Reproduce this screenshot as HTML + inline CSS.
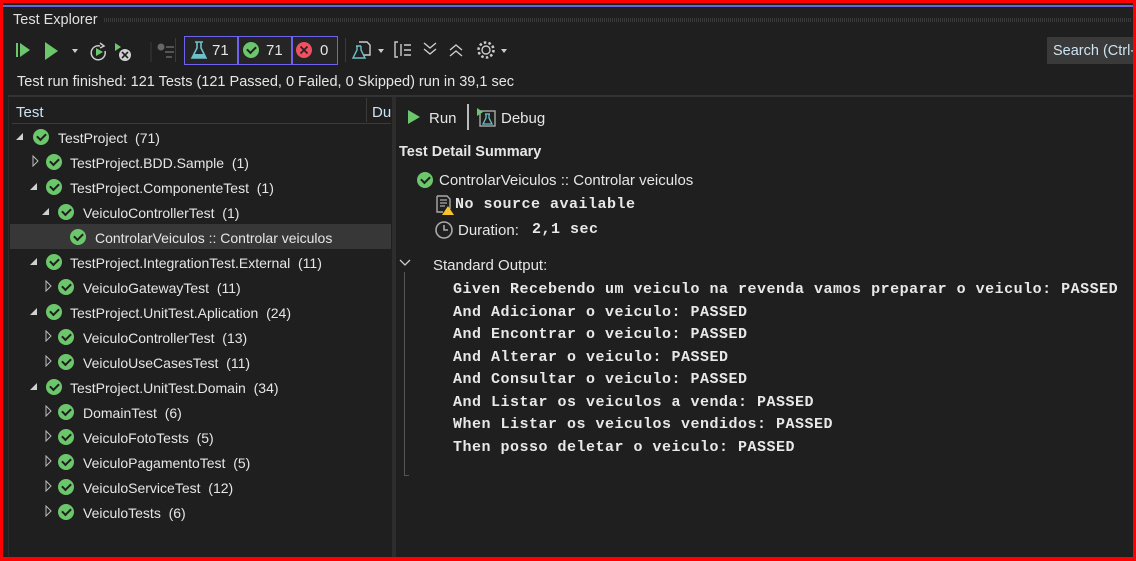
<!DOCTYPE html>
<html><head><meta charset="utf-8"><style>
*{margin:0;padding:0;box-sizing:border-box}
body{width:1136px;height:561px;overflow:hidden;background:#1f1f1f;font-family:"Liberation Sans",sans-serif;color:#e6e6e6;position:relative}
.abs{position:absolute;white-space:nowrap}
.frame{position:absolute;left:0;top:0;width:1136px;height:561px;border:3px solid #f00;border-bottom-width:4px;z-index:10;pointer-events:none}
.t{font-size:14px}
.chk{position:absolute;width:16px;height:16px;border-radius:50%;background:#6cc76c}
.chk:after{content:"";position:absolute;left:4px;top:4px;width:7px;height:4px;border-left:2px solid #1f1f1f;border-bottom:2px solid #1f1f1f;transform:rotate(-45deg)}
.tri{position:absolute;width:0;height:0}
.open{border-left:7px solid transparent;border-bottom:7px solid #d0d0d0}
.mono{font-family:"Liberation Mono",monospace;font-weight:bold;font-size:15px;letter-spacing:0.5px;color:#e8e8e8}
</style></head><body>
<div class="frame"></div>
<div class="abs" style="left:3px;top:5px;width:1130px;height:2px;background:#6a64d8"></div>
<div class="abs t" style="left:13px;top:12px;color:#e0e0e0;font-size:14.5px">Test Explorer</div>
<div class="abs" style="left:104px;top:18px;width:1028px;height:4px;background:repeating-linear-gradient(90deg,#3a3a3a 0 1px,transparent 1px 2px)"></div>

<svg class="abs" style="left:14px;top:40px" width="160" height="22">
<path d="M3 3v14" stroke="#6cc76c" stroke-width="2"/><path d="M6 3l10 7-10 7z" fill="#6cc76c"/>
<path d="M31 2l13 9-13 9z" fill="#6cc76c"/>
<path d="M58 9l6 0-3 4z" fill="#ccc"/>
<path d="M86 6a7 7 0 1 0 5 5" stroke="#ccc" stroke-width="1.5" fill="none"/><path d="M86 3l4 3-4 2" stroke="#ccc" stroke-width="1.5" fill="none"/><path d="M82 8l7 4-7 4z" fill="#6cc76c"/>
<path d="M101 3l6 4-6 4z" fill="#6cc76c"/><circle cx="111" cy="15" r="6" fill="#d0d0d0"/><path d="M108 12l6 6M114 12l-6 6" stroke="#1f1f1f" stroke-width="1.6"/>
<path d="M137 2v20" stroke="#3a3a3a"/>
<circle cx="147" cy="7" r="3.5" fill="#666"/><path d="M152 7h8M151 12h9M152 17h6" stroke="#666" stroke-width="1.5"/>
</svg>
<div class="abs" style="left:175px;top:38px;width:1px;height:24px;background:#3a3a3a"></div>
<div class="abs" style="left:184px;top:36px;width:154px;height:29px;border:1px solid #6f62ee;background:#252526"></div>
<div class="abs" style="left:237px;top:36px;width:2px;height:29px;background:#6f62ee"></div>
<div class="abs" style="left:291px;top:36px;width:2px;height:29px;background:#6f62ee"></div>
<svg class="abs" style="left:189px;top:40px" width="20" height="20"><path d="M6 2h8M8 2v6l-5 10h14l-5-10V2" stroke="#6cc0c8" stroke-width="1.6" fill="none"/><path d="M5 14h10l2 4H3z" fill="#6cc0c8"/></svg>
<div class="abs t" style="left:212px;top:42px;font-size:15px">71</div>
<div class="chk" style="left:243px;top:42px"></div>
<div class="abs t" style="left:266px;top:42px;font-size:15px">71</div>
<div class="abs" style="left:296px;top:42px;width:16px;height:16px;border-radius:50%;background:#f0505f"></div>
<svg class="abs" style="left:296px;top:42px" width="16" height="16"><path d="M4.5 4.5l7 7M11.5 4.5l-7 7" stroke="#222" stroke-width="1.6"/></svg>
<div class="abs t" style="left:320px;top:42px;font-size:15px">0</div>
<div class="abs" style="left:345px;top:38px;width:1px;height:24px;background:#3a3a3a"></div>
<svg class="abs" style="left:350px;top:38px" width="170" height="24">
<path d="M9 4h8l3 3v10h-6" stroke="#ccc" stroke-width="1.4" fill="none"/><path d="M6 8h5M7 8v4l-4 8h12l-4-8V8" stroke="#6cc0c8" stroke-width="1.4" fill="none"/>
<path d="M28 11h6l-3 4z" fill="#ccc"/>
<path d="M48 4h-3v15h3M51 6v12M54 7h7M54 12h7M54 17h7" stroke="#ccc" stroke-width="1.4" fill="none"/>
<path d="M74 5l6 5 6-5M74 11l6 5 6-5" stroke="#ccc" stroke-width="1.4" fill="none"/>
<path d="M100 12l6-5 6 5M100 18l6-5 6 5" stroke="#ccc" stroke-width="1.4" fill="none"/>
<circle cx="136" cy="12" r="4" stroke="#ccc" stroke-width="1.4" fill="none"/><circle cx="136" cy="12" r="7.5" stroke="#ccc" stroke-width="2.5" stroke-dasharray="2.5 2.2" fill="none"/>
<path d="M151 11h6l-3 4z" fill="#ccc"/>
</svg>
<div class="abs" style="left:1047px;top:37px;width:89px;height:27px;background:#3a3a3a"></div>
<div class="abs t" style="left:1053px;top:43px;font-size:14.5px;color:#cfe2f0">Search (Ctrl-E)</div>

<div class="abs t" style="left:17px;top:74px;font-size:14.5px">Test run finished: 121 Tests (121 Passed, 0 Failed, 0 Skipped) run in 39,1 sec</div>
<div class="abs" style="left:8px;top:95px;width:1125px;height:2px;background:#333"></div>
<div class="abs" style="left:8px;top:97px;width:1px;height:464px;background:#2a2a2a"></div>

<div class="abs t" style="left:16px;top:104px;color:#cfe2f0;font-size:15px">Test</div>
<div class="abs" style="left:366px;top:98px;width:1px;height:24px;background:#3a3a3a"></div>
<div class="abs t" style="left:372px;top:104px;color:#cfe2f0;font-size:15px">Du</div>
<div class="abs" style="left:12px;top:123px;width:379px;height:1px;background:#3a3a3a"></div>
<div class="abs" style="left:392px;top:97px;width:4px;height:464px;background:#2d2d2d"></div>

<div class="abs" style="left:10px;top:224px;width:381px;height:25px;background:#373737"></div>
<div class="tri open" style="left:16px;top:133px"></div><div class="chk" style="left:33px;top:129px"></div><div class="abs t" style="left:58px;top:130px">TestProject&nbsp; (71)</div>

<svg class="abs" style="left:32px;top:155px" width="8" height="12"><path d="M1 1l5 5-5 5z" stroke="#bbb" fill="none"/></svg><div class="chk" style="left:46px;top:154px"></div><div class="abs t" style="left:70px;top:155px">TestProject.BDD.Sample&nbsp; (1)</div>
<div class="tri open" style="left:30px;top:183px"></div><div class="chk" style="left:46px;top:179px"></div><div class="abs t" style="left:70px;top:180px">TestProject.ComponenteTest&nbsp; (1)</div>
<div class="tri open" style="left:42px;top:208px"></div><div class="chk" style="left:58px;top:204px"></div><div class="abs t" style="left:83px;top:205px">VeiculoControllerTest&nbsp; (1)</div>
<div class="chk" style="left:70px;top:229px"></div><div class="abs t" style="left:95px;top:230px">ControlarVeiculos :: Controlar veiculos</div>
<div class="tri open" style="left:30px;top:258px"></div><div class="chk" style="left:46px;top:254px"></div><div class="abs t" style="left:70px;top:255px">TestProject.IntegrationTest.External&nbsp; (11)</div>
<svg class="abs" style="left:45px;top:280px" width="8" height="12"><path d="M1 1l5 5-5 5z" stroke="#bbb" fill="none"/></svg><div class="chk" style="left:58px;top:279px"></div><div class="abs t" style="left:83px;top:280px">VeiculoGatewayTest&nbsp; (11)</div>
<div class="tri open" style="left:30px;top:308px"></div><div class="chk" style="left:46px;top:304px"></div><div class="abs t" style="left:70px;top:305px">TestProject.UnitTest.Aplication&nbsp; (24)</div>
<svg class="abs" style="left:45px;top:330px" width="8" height="12"><path d="M1 1l5 5-5 5z" stroke="#bbb" fill="none"/></svg><div class="chk" style="left:58px;top:329px"></div><div class="abs t" style="left:83px;top:330px">VeiculoControllerTest&nbsp; (13)</div>
<svg class="abs" style="left:45px;top:355px" width="8" height="12"><path d="M1 1l5 5-5 5z" stroke="#bbb" fill="none"/></svg><div class="chk" style="left:58px;top:354px"></div><div class="abs t" style="left:83px;top:355px">VeiculoUseCasesTest&nbsp; (11)</div>
<div class="tri open" style="left:30px;top:383px"></div><div class="chk" style="left:46px;top:379px"></div><div class="abs t" style="left:70px;top:380px">TestProject.UnitTest.Domain&nbsp; (34)</div>
<svg class="abs" style="left:45px;top:405px" width="8" height="12"><path d="M1 1l5 5-5 5z" stroke="#bbb" fill="none"/></svg><div class="chk" style="left:58px;top:404px"></div><div class="abs t" style="left:83px;top:405px">DomainTest&nbsp; (6)</div>
<svg class="abs" style="left:45px;top:430px" width="8" height="12"><path d="M1 1l5 5-5 5z" stroke="#bbb" fill="none"/></svg><div class="chk" style="left:58px;top:429px"></div><div class="abs t" style="left:83px;top:430px">VeiculoFotoTests&nbsp; (5)</div>
<svg class="abs" style="left:45px;top:455px" width="8" height="12"><path d="M1 1l5 5-5 5z" stroke="#bbb" fill="none"/></svg><div class="chk" style="left:58px;top:454px"></div><div class="abs t" style="left:83px;top:455px">VeiculoPagamentoTest&nbsp; (5)</div>
<svg class="abs" style="left:45px;top:480px" width="8" height="12"><path d="M1 1l5 5-5 5z" stroke="#bbb" fill="none"/></svg><div class="chk" style="left:58px;top:479px"></div><div class="abs t" style="left:83px;top:480px">VeiculoServiceTest&nbsp; (12)</div>
<svg class="abs" style="left:45px;top:505px" width="8" height="12"><path d="M1 1l5 5-5 5z" stroke="#bbb" fill="none"/></svg><div class="chk" style="left:58px;top:504px"></div><div class="abs t" style="left:83px;top:505px">VeiculoTests&nbsp; (6)</div>

<svg class="abs" style="left:407px;top:109px" width="14" height="16"><path d="M1 1l12 7-12 7z" fill="#6cc76c"/></svg>
<div class="abs t" style="left:429px;top:110px;font-size:15px">Run</div>
<div class="abs" style="left:467px;top:104px;width:2px;height:26px;background:#bbb"></div>
<svg class="abs" style="left:476px;top:107px" width="22" height="22"><rect x="4" y="4" width="15" height="15" stroke="#aaa" stroke-width="1.4" fill="none"/><path d="M1 1l6 4-6 4z" fill="#6cc76c"/><path d="M9 7h5M10 7v4l-3 6h9l-3-6V7" stroke="#6cc0c8" stroke-width="1.3" fill="none"/></svg>
<div class="abs t" style="left:501px;top:110px;font-size:15px">Debug</div>
<div class="abs t" style="left:399px;top:144px;font-weight:bold;font-size:14.5px">Test Detail Summary</div>
<div class="chk" style="left:417px;top:172px"></div>
<div class="abs t" style="left:439px;top:172px;font-size:15px">ControlarVeiculos :: Controlar veiculos</div>
<svg class="abs" style="left:435px;top:194px" width="20" height="22"><path d="M2 2h10l3 3v10" stroke="#aaa" stroke-width="1.4" fill="none"/><path d="M2 2v16h6" stroke="#aaa" stroke-width="1.4" fill="none"/><path d="M5 6h7M5 9h7M5 12h5" stroke="#aaa" stroke-width="1.2"/><path d="M13 12l6 9h-12z" fill="#f5c230"/></svg>
<div class="abs mono" style="left:455px;top:196px">No source available</div>
<svg class="abs" style="left:434px;top:220px" width="20" height="20"><circle cx="10" cy="10" r="8" stroke="#aaa" stroke-width="1.6" fill="none"/><path d="M10 5v5h4" stroke="#aaa" stroke-width="1.6" fill="none"/></svg>
<div class="abs t" style="left:458px;top:222px;font-size:15px">Duration:</div>
<div class="abs mono" style="left:532px;top:221px">2,1 sec</div>

<svg class="abs" style="left:398px;top:258px" width="14" height="10"><path d="M2 2l5 5 5-5" stroke="#ccc" stroke-width="1.3" fill="none"/></svg>
<div class="abs" style="left:404px;top:272px;width:1px;height:204px;background:#555"></div>
<div class="abs" style="left:404px;top:475px;width:5px;height:1px;background:#555"></div>
<div class="abs t" style="left:433px;top:257px;font-size:15px">Standard Output:</div>
<div class="abs mono" style="left:453px;top:279px;line-height:22.5px">Given Recebendo um veiculo na revenda vamos preparar o veiculo: PASSED<br>And Adicionar o veiculo: PASSED<br>And Encontrar o veiculo: PASSED<br>And Alterar o veiculo: PASSED<br>And Consultar o veiculo: PASSED<br>And Listar os veiculos a venda: PASSED<br>When Listar os veiculos vendidos: PASSED<br>Then posso deletar o veiculo: PASSED</div>
</body></html>
